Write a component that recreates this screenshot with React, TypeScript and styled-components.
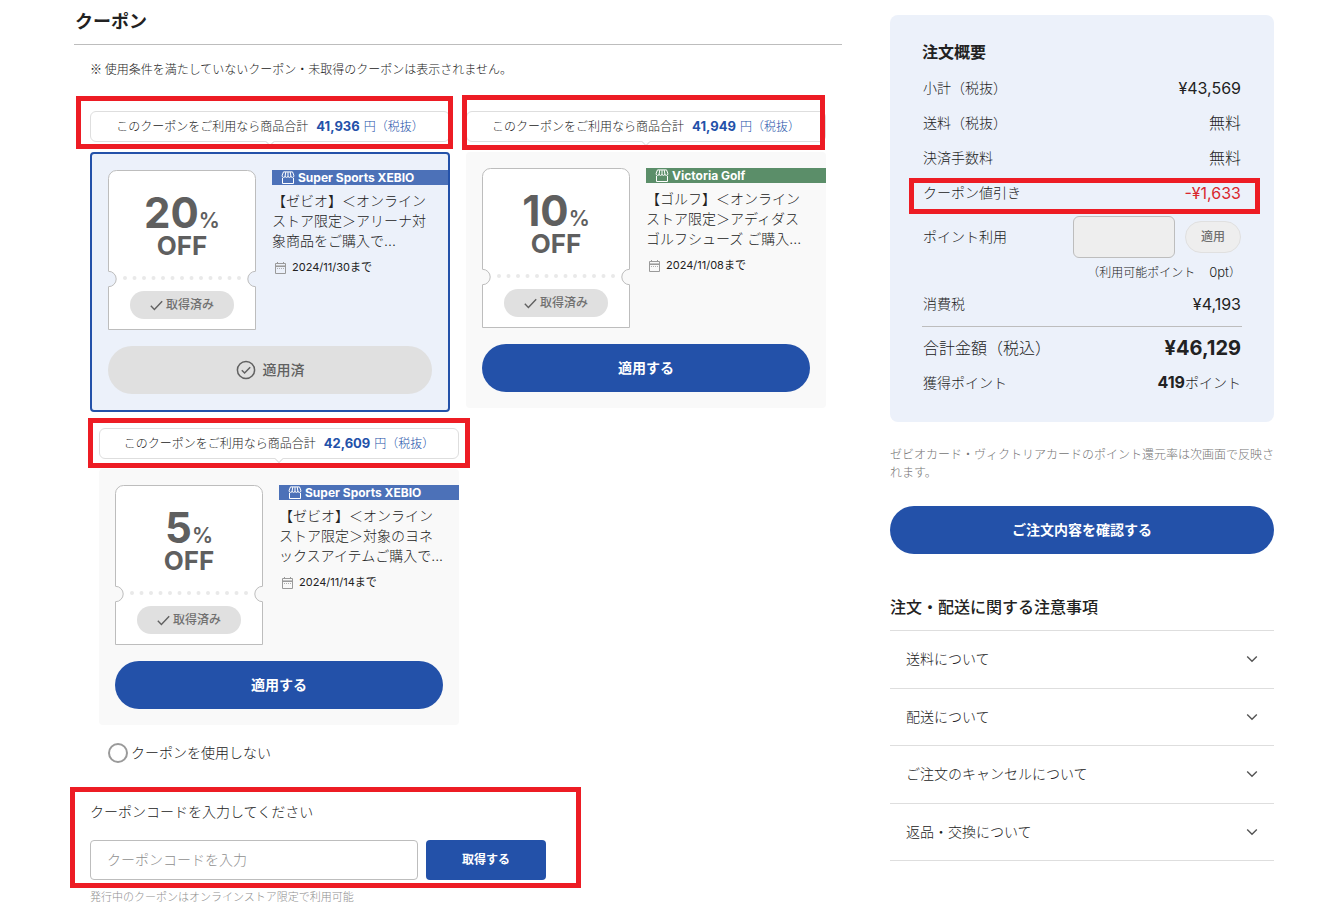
import React from "react";
import styled, { createGlobalStyle, css } from "styled-components";

const color = {
  text: "#222222",
  sub: "#616161",
  hint: "#8f8f8f",
  line: "#bdbdbd",
  lineLight: "#dedede",
  primary: "#2351a9",
  xebio: "#4c71b8",
  golf: "#5b8e69",
  panel: "#ecf1fa",
  card: "#f9f9f9",
  disabled: "#e0e0e0",
  red: "#d9272e",
  mark: "#ed1c24",
};

const GlobalStyle = createGlobalStyle`
  *, *::before, *::after { box-sizing: border-box; }
  body {
    margin: 0;
    background: #ffffff;
    color: ${color.text};
    font-family: Inter, "Noto Sans CJK JP", sans-serif;
    font-size: 14px;
    font-weight: 300;
    line-height: 20px;
  }
  h1, h2, p, ul, dl, dd { margin: 0; padding: 0; }
  ul { list-style: none; }
  button, input { font: inherit; color: inherit; margin: 0; }
  button { cursor: pointer; padding: 0; border: 0; }
`;

const Page = styled.main`
  display: grid;
  grid-template-columns: minmax(0, 2fr) minmax(0, 1fr);
  gap: 48px;
  align-items: start;
  padding: 0 70px 10px 74px;
`;

/* Highlight frame drawn over the content it surrounds */
const Mark = styled.span<{ $t: number; $r: number; $b: number; $l: number }>`
  position: absolute;
  z-index: 2;
  top: ${(p) => -p.$t}px;
  right: ${(p) => -p.$r}px;
  bottom: ${(p) => -p.$b}px;
  left: ${(p) => -p.$l}px;
  border: 5px solid ${color.mark};
  pointer-events: none;
`;

/* ---------- coupons ---------- */

const SectionTitle = styled.h1`
  padding: 8px 0 8px 1px;
  border-bottom: 1px solid ${color.line};
  font-size: 18px;
  font-weight: 700;
  line-height: 28px;
`;

const SectionBody = styled.div`
  padding: 15px 16px 0;
`;

const Note = styled.p`
  font-family: "Noto Sans CJK JP", sans-serif;
  font-size: 12px;
  line-height: 18px;
`;

const CouponList = styled.ul`
  display: grid;
  grid-template-columns: repeat(2, minmax(0, 1fr));
  gap: 16px;
  align-items: start;
  margin-top: 33px;
`;

const CouponItem = styled.li<{ $shifted?: boolean }>`
  display: flex;
  flex-direction: column;
  gap: 10px;
  ${(p) => p.$shifted && css`margin: 0 -9px 0 9px;`}
`;

const Balloon = styled.p`
  position: relative;
  display: flex;
  justify-content: center;
  align-items: center;
  height: 31px;
  border: 1px solid ${color.lineLight};
  border-radius: 6px;
  font-size: 12px;
  white-space: nowrap;

  &::after {
    content: "";
    position: absolute;
    bottom: -4px;
    left: 50%;
    width: 6px;
    height: 6px;
    margin-left: -3px;
    background: #ffffff;
    border: solid ${color.lineLight};
    border-width: 0 1px 1px 0;
    transform: rotate(45deg);
  }
`;

const BalloonPrice = styled.span`
  margin-left: 8px;
  color: ${color.primary};

  strong {
    margin-right: 4px;
    font-size: 13px;
    font-weight: 700;
  }
`;

const Card = styled.article<{ $selected?: boolean }>`
  display: flex;
  flex-direction: column;
  gap: 16px;
  padding: 16px;
  border-radius: 4px;
  background: ${(p) => (p.$selected ? color.panel : color.card)};
  border: ${(p) => (p.$selected ? `2px solid ${color.primary}` : "0")};
`;

const CardTop = styled.div`
  display: flex;
  gap: 16px;
`;

const Ticket = styled.div`
  position: relative;
  flex: none;
  display: flex;
  flex-direction: column;
  align-items: center;
  width: 148px;
  height: 160px;
  padding-top: 21px;
  color: #5f5f5f;
  font-weight: 700;
`;

const TicketShape = styled.svg`
  position: absolute;
  inset: 0;
`;

const Rate = styled.p`
  position: relative;
  height: 44px;
  font-size: 42px;
  line-height: 44px;

  small {
    font-size: 21px;
    font-weight: 600;
    line-height: 20px;
  }
`;

const Off = styled.p`
  position: relative;
  font-size: 26px;
  line-height: 22px;
`;

const Obtained = styled.p`
  position: relative;
  display: flex;
  align-items: center;
  justify-content: center;
  gap: 3px;
  width: 104px;
  height: 28px;
  margin-top: 34px;
  border-radius: 14px;
  background: ${color.disabled};
  color: #707070;
  font-size: 12px;
  font-weight: 500;
`;

const Info = styled.div`
  flex: 1;
  min-width: 0;
`;

const Brand = styled.p<{ $golf?: boolean }>`
  display: flex;
  align-items: center;
  gap: 3px;
  height: 15px;
  margin-right: -16px;
  padding-left: 9px;
  background: ${(p) => (p.$golf ? color.golf : color.xebio)};
  color: #ffffff;
  font-size: 12px;
  font-weight: 700;
  line-height: 14px;
  white-space: nowrap;
`;

const CouponName = styled.p`
  margin-top: 6px;
  white-space: pre;
`;

const Expiry = styled.p`
  display: flex;
  align-items: center;
  gap: 5px;
  margin-top: 7px;
  padding-left: 2px;
  font-size: 11px;
  font-weight: 400;
  line-height: 18px;
`;

const PillButton = styled.button`
  display: flex;
  align-items: center;
  justify-content: center;
  gap: 7px;
  width: 100%;
  height: 48px;
  border-radius: 24px;
  background: ${color.primary};
  color: #ffffff;
  font-weight: 700;

  &:disabled {
    background: ${color.disabled};
    color: ${color.sub};
    font-weight: 500;
    cursor: default;
  }
`;

const NoCoupon = styled.label`
  display: flex;
  align-items: center;
  gap: 3px;
  margin: 18px 0 0 18px;
`;

const Radio = styled.input`
  appearance: none;
  width: 20px;
  height: 20px;
  border: 2px solid #9a9a9a;
  border-radius: 50%;
  background: #ffffff;

  &:checked {
    background: ${color.primary};
    box-shadow: inset 0 0 0 3px #ffffff;
  }
`;

const CodeForm = styled.form`
  position: relative;
  margin-top: 39px;
`;

const CodeLabel = styled.label`
  display: block;
`;

const CodeRow = styled.div`
  display: flex;
  gap: 8px;
  margin-top: 18px;
`;

const CodeInput = styled.input`
  width: 328px;
  height: 40px;
  padding: 0 16px 2px;
  border: 1px solid ${color.line};
  border-radius: 4px;
  background: #ffffff;

  &::placeholder { color: #8f8f8f; opacity: 1; }
`;

const CodeButton = styled.button`
  width: 120px;
  height: 40px;
  border-radius: 4px;
  background: ${color.primary};
  color: #ffffff;
  font-size: 12px;
  font-weight: 700;
`;

const CodeHint = styled.p`
  margin-top: 9px;
  color: ${color.hint};
  font-size: 11px;
  line-height: 16px;
`;

/* ---------- order summary ---------- */

const Aside = styled.aside`
  padding-top: 15px;
`;

const Panel = styled.section`
  padding: 24px 32px 22px;
  border-radius: 8px;
  background: ${color.panel};
`;

const PanelTitle = styled.h2`
  margin-bottom: 5px;
  font-size: 16px;
  font-weight: 700;
  line-height: 26px;
`;

const Line = styled.div`
  position: relative;
  display: flex;
  align-items: center;
  justify-content: space-between;
  height: 35px;
  padding: 0 1px;
`;

const Label = styled.dt<{ $large?: boolean }>`
  font-size: ${(p) => (p.$large ? 16 : 14)}px;
`;

const Value = styled.dd<{ $discount?: boolean; $total?: boolean; $light?: boolean }>`
  font-size: ${(p) => (p.$total ? 20 : 16)}px;
  font-weight: ${(p) => (p.$total ? 700 : p.$light ? 300 : 400)};
  ${(p) => p.$discount && css`color: ${color.red};`}
`;

const Earned = styled.dd`
  strong {
    font-size: 16px;
    font-weight: 700;
  }
`;

const PointLine = styled.div`
  display: flex;
  align-items: flex-end;
  justify-content: space-between;
  height: 53px;
  padding: 0 1px 5px;
`;

const PointLabel = styled.dt`
  padding-bottom: 11px;
`;

const PointEntry = styled.dd`
  display: flex;
  align-items: center;
  gap: 10px;
`;

const PointInput = styled.input`
  width: 102px;
  height: 42px;
  padding: 0 12px;
  border: 1px solid ${color.line};
  border-radius: 6px;
  background: #eeeeee;
`;

const PointButton = styled.button`
  width: 56px;
  height: 32px;
  border: 1px solid ${color.disabled};
  border-radius: 16px;
  background: #eeeeee;
  color: #707070;
  font-size: 12px;
  font-weight: 500;
`;

const PointBalance = styled.p`
  margin-bottom: 4px;
  padding-right: 1px;
  font-size: 12px;
  line-height: 18px;
  text-align: right;

  span {
    margin-left: 2px;
    font-size: 13px;
  }
`;

const Totals = styled.dl`
  margin-top: 5px;
  padding-top: 3px;
  border-top: 1px solid ${color.line};
`;

const PointNote = styled.p`
  margin: 24px 0;
  color: #757575;
  font-size: 12px;
  line-height: 18px;
`;

const NoticeTitle = styled.h2`
  padding-bottom: 11px;
  margin-top: 41px;
  border-bottom: 1px solid ${color.lineLight};
  font-size: 16px;
  font-weight: 500;
  line-height: 24px;
`;

const NoticeList = styled.ul`
  display: grid;
  grid-auto-rows: 1fr;
  min-height: 230px;
`;

const NoticeItem = styled.li`
  display: flex;
  border-bottom: 1px solid ${color.lineLight};
`;

const NoticeButton = styled.button`
  flex: 1;
  display: flex;
  align-items: center;
  justify-content: space-between;
  padding: 0 16px;
  background: none;
  text-align: left;
`;

/* ---------- icons ---------- */

const StoreIcon = () => (
  <svg width="14" height="13" viewBox="0 0 14 13" fill="none" stroke="#ffffff" strokeWidth="1" aria-hidden="true">
    <path d="M2.5 .9h9l1.3 3.3v.9a1.45 1.3 0 0 1-2.9 0 1.45 1.3 0 0 1-2.9 0 1.45 1.3 0 0 1-2.9 0 1.45 1.3 0 0 1-2.9 0v-.9zM4.8 1L4.1 5M9.2 1l.7 4M7 1v4M1.5 7v5.5h11V7" />
  </svg>
);

const CalendarIcon = () => (
  <svg width="13" height="13" viewBox="0 0 13 13" fill="none" stroke="#9a9a9a" strokeWidth="1" aria-hidden="true">
    <path d="M1.5 2.5h10v10h-10zM3.5 1v1.5M9.5 1v1.5" />
    <path d="M2 4.5h9" stroke="#c2c2c2" />
    <path d="M2 5.5h9" />
    <path d="M3 7.5h8" stroke="#b0b0b0" strokeDasharray="1 1" />
  </svg>
);

const CheckIcon = () => (
  <svg width="13" height="11" viewBox="0 0 13 11" fill="none" stroke="#616161" strokeWidth="1.4" aria-hidden="true">
    <path d="M.8 5.8l3.6 3.6L12.2 1.2" />
  </svg>
);

const AppliedIcon = () => (
  <svg width="20" height="20" viewBox="0 0 20 20" fill="none" stroke="#616161" strokeWidth="1.5" aria-hidden="true">
    <circle cx="10" cy="10" r="8.6" />
    <path d="M5.8 10.3l2.8 2.7 5.6-5.8" />
  </svg>
);

const ChevronIcon = () => (
  <svg width="12" height="8" viewBox="0 0 12 8" fill="none" stroke="#555555" strokeWidth="1.4" aria-hidden="true">
    <path d="M1.2 1.4L6 6.2l4.8-4.8" />
  </svg>
);

const dots = Array.from({ length: 13 }, (_, i) => 17 + i * 9.5);

const TicketOutline = () => (
  <TicketShape width="148" height="160" viewBox="0 0 148 160" aria-hidden="true">
    <path
      d="M8.5 .5H139.5a8 8 0 0 1 8 8V101.3a7.7 7.7 0 0 0 0 15.4V159.5H.5V116.7a7.7 7.7 0 0 0 0-15.4V8.5a8 8 0 0 1 8-8z"
      fill="#ffffff"
      stroke={color.line}
    />
    {dots.map((x) => (
      <circle key={x} cx={x} cy="108" r="2" fill="#e9e9e9" />
    ))}
  </TicketShape>
);

/* ---------- data ---------- */

type Coupon = {
  price: string;
  rate: string;
  brand: string;
  golf?: boolean;
  name: string;
  until: string;
  applied?: boolean;
  shifted?: boolean;
  mark: [number, number, number, number];
};

const coupons: Coupon[] = [
  {
    price: "41,936",
    rate: "20",
    brand: "Super Sports XEBIO",
    name: "【ゼビオ】＜オンライン\nストア限定＞アリーナ対\n象商品をご購入で...",
    until: "2024/11/30まで",
    applied: true,
    mark: [16, 4, 8, 15],
  },
  {
    price: "41,949",
    rate: "10",
    brand: "Victoria Golf",
    golf: true,
    name: "【ゴルフ】＜オンライン\nストア限定＞アディダス\nゴルフシューズ ご購入...",
    until: "2024/11/08まで",
    mark: [17, 0, 9, 5],
  },
  {
    price: "42,609",
    rate: "5",
    brand: "Super Sports XEBIO",
    name: "【ゼビオ】＜オンライン\nストア限定＞対象のヨネ\nックスアイテムご購入で...",
    until: "2024/11/14まで",
    shifted: true,
    mark: [11, 12, 10, 12],
  },
];

const notices = ["送料について", "配送について", "ご注文のキャンセルについて", "返品・交換について"];

const CouponEntry = ({ c }: { c: Coupon }) => (
  <CouponItem $shifted={c.shifted}>
    <Balloon>
      このクーポンをご利用なら商品合計
      <BalloonPrice>
        <strong>{c.price}</strong>円（税抜）
      </BalloonPrice>
      <Mark $t={c.mark[0]} $r={c.mark[1]} $b={c.mark[2]} $l={c.mark[3]} />
    </Balloon>
    <Card $selected={c.applied}>
      <CardTop>
        <Ticket>
          <TicketOutline />
          <Rate>
            {c.rate}
            <small>%</small>
          </Rate>
          <Off>OFF</Off>
          <Obtained>
            <CheckIcon />
            取得済み
          </Obtained>
        </Ticket>
        <Info>
          <Brand $golf={c.golf}>
            <StoreIcon />
            {c.brand}
          </Brand>
          <CouponName>{c.name}</CouponName>
          <Expiry>
            <CalendarIcon />
            {c.until}
          </Expiry>
        </Info>
      </CardTop>
      <PillButton type="button" disabled={c.applied}>
        {c.applied && <AppliedIcon />}
        {c.applied ? "適用済" : "適用する"}
      </PillButton>
    </Card>
  </CouponItem>
);

export default function App() {
  return (
    <>
      <GlobalStyle />
      <Page lang="ja">
        <section>
          <SectionTitle>クーポン</SectionTitle>
          <SectionBody>
            <Note>※ 使用条件を満たしていないクーポン・未取得のクーポンは表示されません。</Note>
            <CouponList>
              {coupons.map((c) => (
                <CouponEntry key={c.price} c={c} />
              ))}
            </CouponList>
            <NoCoupon>
              <Radio type="radio" name="coupon" />
              クーポンを使用しない
            </NoCoupon>
            <CodeForm onSubmit={(e) => e.preventDefault()}>
              <Mark $t={15} $r={-245} $b={-17} $l={20} />
              <CodeLabel htmlFor="code">クーポンコードを入力してください</CodeLabel>
              <CodeRow>
                <CodeInput id="code" type="text" placeholder="クーポンコードを入力" />
                <CodeButton type="submit">取得する</CodeButton>
              </CodeRow>
              <CodeHint>発行中のクーポンはオンラインストア限定で利用可能</CodeHint>
            </CodeForm>
          </SectionBody>
        </section>

        <Aside>
          <Panel>
            <PanelTitle>注文概要</PanelTitle>
            <dl>
              <Line>
                <Label>小計（税抜）</Label>
                <Value>¥43,569</Value>
              </Line>
              <Line>
                <Label>送料（税抜）</Label>
                <Value $light>無料</Value>
              </Line>
              <Line>
                <Label>決済手数料</Label>
                <Value $light>無料</Value>
              </Line>
              <Line>
                <Label>クーポン値引き</Label>
                <Value $discount>-¥1,633</Value>
                <Mark as="dd" $t={-3} $r={18} $b={4} $l={13} />
              </Line>
              <PointLine>
                <PointLabel>
                  <label htmlFor="points">ポイント利用</label>
                </PointLabel>
                <PointEntry>
                  <PointInput id="points" type="text" disabled />
                  <PointButton type="button" disabled>
                    適用
                  </PointButton>
                </PointEntry>
              </PointLine>
            </dl>
            <PointBalance>
              （利用可能ポイント　<span>0pt</span>）
            </PointBalance>
            <dl>
              <Line>
                <Label>消費税</Label>
                <Value>¥4,193</Value>
              </Line>
            </dl>
            <Totals>
              <Line>
                <Label $large>合計金額（税込）</Label>
                <Value $total>¥46,129</Value>
              </Line>
              <Line>
                <Label>獲得ポイント</Label>
                <Earned>
                  <strong>419</strong>ポイント
                </Earned>
              </Line>
            </Totals>
          </Panel>
          <PointNote>ゼビオカード・ヴィクトリアカードのポイント還元率は次画面で反映されます。</PointNote>
          <PillButton type="button">ご注文内容を確認する</PillButton>
          <NoticeTitle>注文・配送に関する注意事項</NoticeTitle>
          <NoticeList>
            {notices.map((n) => (
              <NoticeItem key={n}>
                <NoticeButton type="button" aria-expanded="false">
                  {n}
                  <ChevronIcon />
                </NoticeButton>
              </NoticeItem>
            ))}
          </NoticeList>
        </Aside>
      </Page>
    </>
  );
}
